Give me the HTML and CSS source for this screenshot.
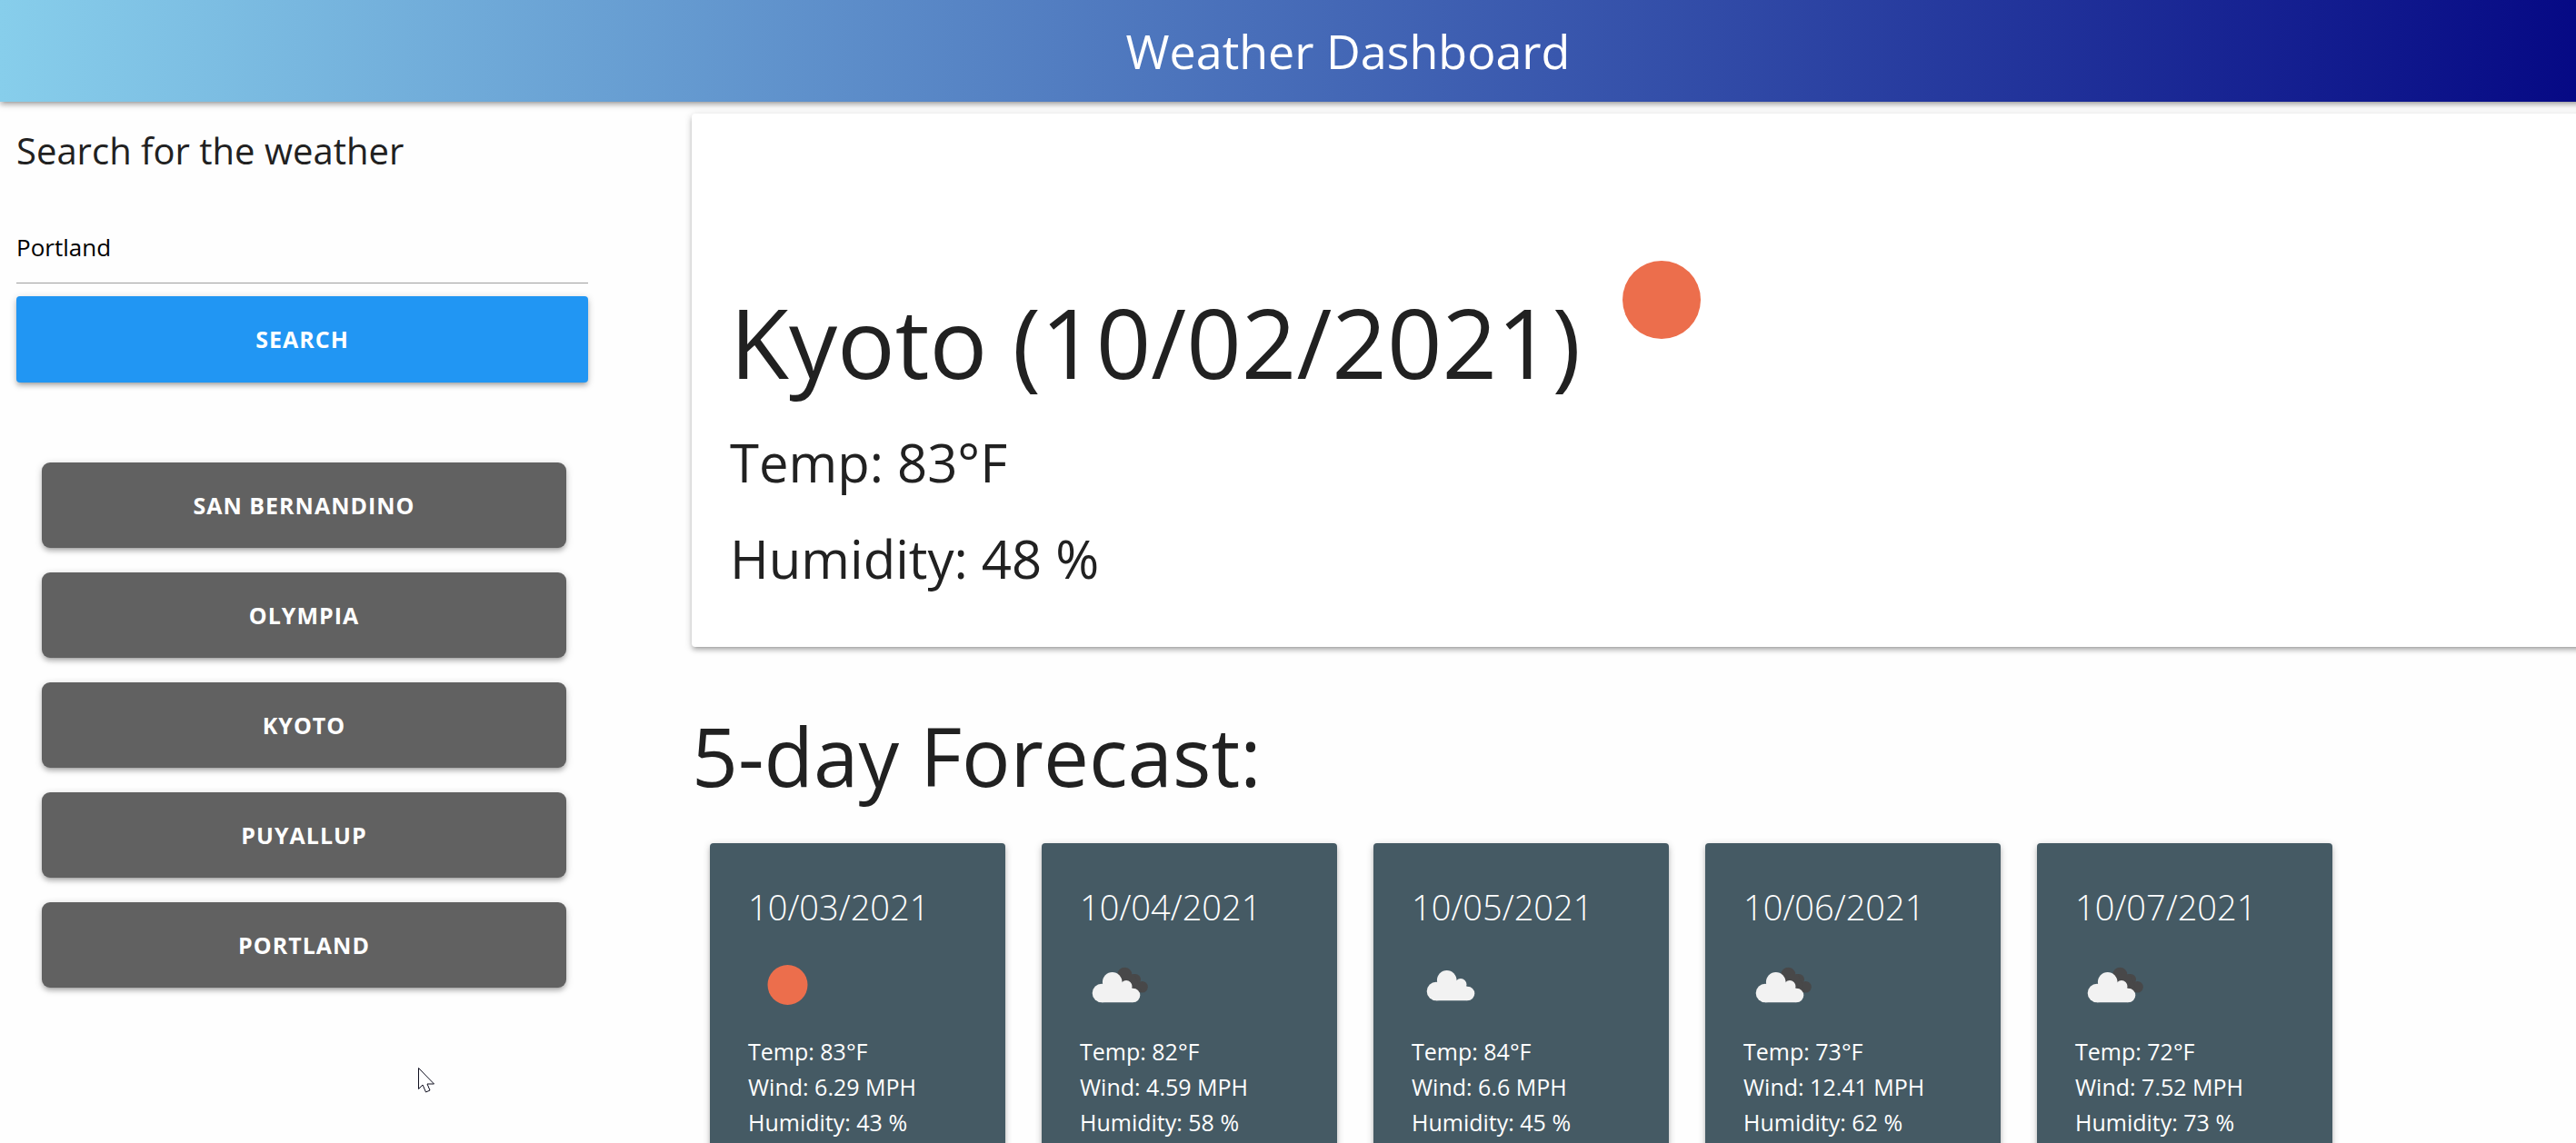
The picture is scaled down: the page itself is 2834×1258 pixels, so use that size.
FILE: index.html
```html
<!DOCTYPE html>
<html lang="en">
<head>
<meta charset="utf-8">
<meta name="viewport" content="width=device-width, initial-scale=1">
<title>Weather Dashboard</title>
<link rel="stylesheet" href="styles.css">
</head>
<body>
<svg class="symbols" aria-hidden="true">
  <symbol id="sun" viewBox="0 0 88 88"><circle cx="43.500" cy="44" r="22" fill="#ec6e4c"/></symbol>
  <g id="cloud-shape"><circle cx="24" cy="53" r="10.300"/><circle cx="35.700" cy="40.800" r="10.800"/><circle cx="51" cy="45.500" r="6.500"/><circle cx="58.500" cy="55.500" r="7.800"/><path d="M24 45h31l3 3v15.300H24z"/></g>
  <symbol id="cloud" viewBox="0 0 88 88"><use href="#cloud-shape" x="3" y="-2" fill="#f2f2f2"/></symbol>
  <symbol id="clouds" viewBox="0 0 88 88"><g fill="#484849"><circle cx="49.300" cy="32.700" r="8"/><circle cx="61" cy="38" r="6"/><circle cx="68.500" cy="46.300" r="6.300"/><path d="M42 34l18-2 8 20H55z"/></g><use href="#cloud-shape" fill="#f2f2f2"/></symbol>
</svg>
<header class="navbar"><h1 class="brand">Weather Dashboard</h1></header>
<div class="layout">
  <aside class="sidebar">
    <form class="search">
      <label class="search-label" for="city">Search for the weather</label>
      <input class="search-input" id="city" type="text" value="Portland">
      <button class="button search-button" type="button">Search</button>
    </form>
    <div class="history">
      <button class="button history-button" type="button">San Bernandino</button>
      <button class="button history-button" type="button">Olympia</button>
      <button class="button history-button" type="button">Kyoto</button>
      <button class="button history-button" type="button">Puyallup</button>
      <button class="button history-button" type="button">Portland</button>
    </div>
  </aside>
  <main class="content">
    <section class="current">
      <div class="current-head">
        <h2 class="current-title">Kyoto (10/02/2021)</h2>
        <svg class="current-icon" role="img" aria-label="Clear"><use href="#sun"/></svg>
      </div>
      <p class="current-line">Temp: 83°F</p>
      <p class="current-line">Humidity: 48 %</p>
    </section>
    <h2 class="forecast-title">5-day Forecast:</h2>
    <section class="forecast">
      <article class="day"><h3 class="day-date">10/03/2021</h3><svg class="day-icon"><use href="#sun"/></svg><p>Temp: 83°F</p><p>Wind: 6.29 MPH</p><p>Humidity: 43 %</p></article>
      <article class="day"><h3 class="day-date">10/04/2021</h3><svg class="day-icon"><use href="#clouds"/></svg><p>Temp: 82°F</p><p>Wind: 4.59 MPH</p><p>Humidity: 58 %</p></article>
      <article class="day"><h3 class="day-date">10/05/2021</h3><svg class="day-icon"><use href="#cloud"/></svg><p>Temp: 84°F</p><p>Wind: 6.6 MPH</p><p>Humidity: 45 %</p></article>
      <article class="day"><h3 class="day-date">10/06/2021</h3><svg class="day-icon"><use href="#clouds"/></svg><p>Temp: 73°F</p><p>Wind: 12.41 MPH</p><p>Humidity: 62 %</p></article>
      <article class="day"><h3 class="day-date">10/07/2021</h3><svg class="day-icon"><use href="#clouds"/></svg><p>Temp: 72°F</p><p>Wind: 7.52 MPH</p><p>Humidity: 73 %</p></article>
    </section>
  </main>
</div>
<svg class="cursor" viewBox="0 0 20 30" aria-hidden="true"><path d="M1.500 1.500V24.500L6 20L9.500 28L14 26L11 19H18.500Z" fill="#fff" stroke="#101020"/></svg>
</body>
</html>
```
FILE: styles.css
```css
* { box-sizing: border-box; }
html { scrollbar-width: none; }
body {
  margin: 0;
  overflow-x: hidden;
  background: #fefefe;
  color: #212121;
  font-family: "Open Sans", "Noto Sans", sans-serif;
  font-size: 25px;
  line-height: 39px;
}
h1, h2, h3, p { margin: 0; font-weight: 400; }
.symbols { display: none; }
/* The bar runs past the right edge of the window, as the current-weather card does. */
.navbar {
  margin-right: -132px;
  background: linear-gradient(to right, skyblue, navy);
  color: #fff;
  text-align: center;
  box-shadow: 0 4px 4px rgba(0,0,0,.14), 0 5px 2px -4px rgba(0,0,0,.12), 0 2px 9px rgba(0,0,0,.2);
}
.brand { font-size: 52px; line-height: 112px; }
.layout { display: flex; gap: 114px; padding: 13px 0 0 18px; }
.sidebar { flex: 0 0 629px; }
.search { display: flex; flex-direction: column; }
.search-label { margin-top: 13px; font-size: 40px; line-height: 56px; }
.search-input {
  height: 80px;
  margin: 38px 0 14px;
  padding: 0;
  border: 0;
  border-bottom: 1px solid #9e9e9e;
  background: transparent;
  color: #000;
  font: inherit;
  font-size: 26px;
  outline: 0;
}
.button {
  height: 95px;
  border: 0;
  color: #fff;
  font: inherit;
  font-weight: 700;
  letter-spacing: 1px;
  text-transform: uppercase;
  box-shadow: 0 4px 4px rgba(0,0,0,.14), 0 5px 2px -4px rgba(0,0,0,.12), 0 2px 9px rgba(0,0,0,.2);
}
.search-button { border-radius: 4px; background: #2196f3; }
.history { display: flex; flex-direction: column; gap: 27px; padding: 88px 24px 0 28px; }
.history-button { height: 94px; border-radius: 9px; background: #616161; }
.content { flex: 1; min-width: 0; }
.current {
  margin-right: -132px;
  padding: 119px 42px 44px;
  border-radius: 4px;
  background: #fff;
  box-shadow: 0 4px 4px rgba(0,0,0,.14), 0 5px 2px -4px rgba(0,0,0,.12), 0 2px 9px rgba(0,0,0,.2);
}
.current-head { display: flex; align-items: flex-end; height: 212px; }
.current-title { font-size: 106px; line-height: 160px; }
.current-icon { align-self: flex-start; width: 172px; height: 172px; margin-left: 4px; }
.current-line { font-size: 58px; line-height: 106px; }
.forecast-title { margin-top: 50px; font-size: 89px; line-height: 140px; }
.forecast { display: flex; gap: 40px; margin: 26px 0 0 20px; }
.day {
  flex: 0 0 325px;
  padding: 42px 42px 54px;
  border-radius: 4px;
  background: #455a64;
  color: #fff;
  box-shadow: 0 4px 4px rgba(0,0,0,.14), 0 5px 2px -4px rgba(0,0,0,.12), 0 2px 9px rgba(0,0,0,.2);
}
.day-date { font-size: 38px; font-weight: 300; line-height: 56px; }
.day-icon { display: block; width: 88px; height: 88px; margin: 14px 0 10px; }
.cursor { position: absolute; left: 459px; top: 1174px; width: 20px; height: 30px; }
```
